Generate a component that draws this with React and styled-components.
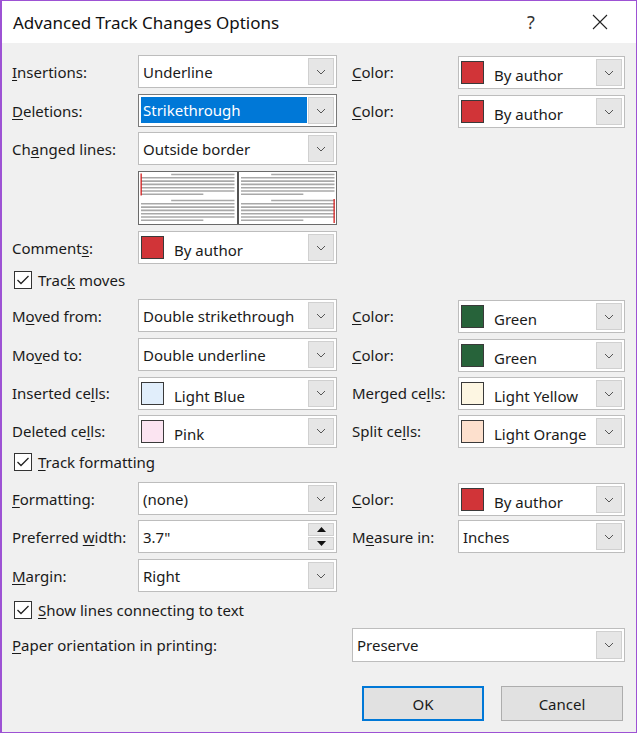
import React from "react";
import styled, { createGlobalStyle } from "styled-components";

const GlobalStyle = createGlobalStyle`
  html, body {
    margin: 0;
    padding: 0;
    background: #f0f0f0;
  }
  * {
    box-sizing: border-box;
  }
`;

const WindowUI = styled.div`
  width: 637px;
  height: 733px;
  border: 1px solid #9d52d4;
  border-left-width: 2px;
  background: #f0f0f0;
  font-family: "Noto Sans", "Open Sans", sans-serif;
  font-size: 15px;
  color: #1a1a1a;
  display: flex;
  flex-direction: column;
`;

const TitleBarUI = styled.div`
  height: 42px;
  background: #fff;
  display: flex;
  align-items: center;
  padding-left: 11px;
  flex-shrink: 0;
`;

const TitleUI = styled.div`
  flex: 1;
  font-size: 17px;
  color: #111;
`;

const HelpUI = styled.div`
  width: 20px;
  font-size: 18px;
  color: #333;
  margin-right: 30px;
`;

const CloseUI = styled.div`
  width: 46px;
  display: flex;
  justify-content: center;
  margin-right: 13px;
`;

const BodyUI = styled.div`
  padding: 0 11px 0 10px;
`;

const RowUI = styled.div`
  display: grid;
  grid-template-columns: 126px 199px 15px 106px 167px;
  align-items: center;
  height: ${(p) => p.$h || 33}px;
  margin-top: ${(p) => p.$mt || 6}px;
`;

const LabelUI = styled.div`
  white-space: nowrap;
  grid-column: ${(p) => p.$col || "auto"};
`;

const SelectUI = styled.div`
  grid-column: ${(p) => p.$col || "auto"};
  height: ${(p) => p.$tall || 33}px;
  margin-top: ${(p) => p.$shift || 0}px;
  display: flex;
  align-items: stretch;
  background: #fff;
  border: 1px solid ${(p) => (p.$focused ? "#7a7a7a" : "#bdbdbd")};
`;

const ValueUI = styled.div`
  flex: 1;
  display: flex;
  align-items: center;
  padding-left: 4px;
  white-space: nowrap;
  overflow: hidden;
`;

const HighlightUI = styled.div`
  flex: 1;
  margin: 2px 1px 3px 2px;
  display: flex;
  align-items: center;
  padding-left: 2px;
  background: #0078d7;
  color: #fff;
`;

const SwatchUI = styled.div`
  width: 23px;
  height: 23px;
  background: ${(p) => p.$color};
  border: 1px solid #3a3a3a;
  margin: 0 10px 0 -2px;
  flex-shrink: 0;
`;

const SwatchTextUI = styled.span`
  padding-top: 5px;
`;

const DropButtonUI = styled.div`
  width: 26px;
  margin: 2px 2px 2px 0;
  background: #e6e6e6;
  border: 1px solid #d0d0d0;
  display: flex;
  align-items: center;
  justify-content: center;
`;

const SpinUI = styled.div`
  width: 26px;
  margin: 2px 2px 2px 0;
  display: flex;
  flex-direction: column;
  gap: 1px;
`;

const SpinHalfUI = styled.div`
  flex: 1;
  background: #e6e6e6;
  border: 1px solid #d0d0d0;
  display: flex;
  align-items: center;
  justify-content: center;
`;

const PreviewUI = styled.div`
  grid-column: 2;
  height: 54px;
  border: 1px solid #6a6a6a;
  background: #fff;
  display: flex;
`;

const PreviewHalfUI = styled.div`
  flex: 1;
  display: flex;
  & + & {
    border-left: 2px solid #555;
  }
`;

const CheckRowUI = styled.div`
  display: flex;
  align-items: center;
  gap: 6px;
  height: 20px;
  margin-top: ${(p) => p.$mt || 6}px;
  padding-left: 2px;
`;

const CheckBoxUI = styled.div`
  width: 18px;
  height: 18px;
  border: 1px solid #333;
  background: #fff;
  display: flex;
  align-items: center;
  justify-content: center;
`;

const ButtonRowUI = styled.div`
  display: flex;
  justify-content: flex-end;
  gap: 17px;
  margin-top: 24px;
  padding-right: 2px;
`;

const ButtonUI = styled.div`
  width: 122px;
  height: 35px;
  background: #e1e1e1;
  border: ${(p) => (p.$primary ? "2px solid #0078d7" : "1px solid #adadad")};
  display: flex;
  align-items: center;
  justify-content: center;
`;

const Key = styled.span`
  text-decoration: underline;
  text-underline-offset: 2px;
`;

function Chevron() {
  return (
    <svg width="10" height="6" viewBox="0 0 10 6">
      <polyline points="1,1 5,5 9,1" fill="none" stroke="#555" strokeWidth="1" />
    </svg>
  );
}

function Select({ value, color, focused, col, shift, tall }) {
  return (
    <SelectUI $focused={focused} $col={col} $shift={shift} $tall={tall}>
      {focused ? (
        <HighlightUI>{value}</HighlightUI>
      ) : (
        <ValueUI>
          {color && <SwatchUI $color={color} />}
          {color ? <SwatchTextUI>{value}</SwatchTextUI> : value}
        </ValueUI>
      )}
      <DropButtonUI>
        <Chevron />
      </DropButtonUI>
    </SelectUI>
  );
}

function Label({ pre, k, post, col }) {
  return (
    <LabelUI $col={col}>
      {pre}
      <Key>{k}</Key>
      {post}
    </LabelUI>
  );
}

function CheckRow({ pre, k, post, mt }) {
  return (
    <CheckRowUI $mt={mt}>
      <CheckBoxUI>
        <svg width="14" height="12" viewBox="0 0 14 12">
          <polyline points="1.5,6 5,9.5 12.5,2" fill="none" stroke="#222" strokeWidth="1.3" />
        </svg>
      </CheckBoxUI>
      <span>
        {pre}
        <Key>{k}</Key>
        {post}
      </span>
    </CheckRowUI>
  );
}

// small page thumbnail: grey text lines with a red change bar
function PreviewPage({ barSide }) {
  const lines = [];
  const w = 97;
  [0, 26].forEach((top, p) => {
    for (let i = 0; i < 7; i++) {
      const y = top + 2.5 + i * 3.3;
      const x1 = i === 0 ? 32 : 2;
      const x2 = i === 6 ? 64 : w - 2;
      lines.push(<line key={p + "-" + i} x1={x1} x2={x2} y1={y} y2={y} stroke="#a8a8a8" strokeWidth="1.6" />);
    }
  });
  return (
    <svg width="100%" height="52" viewBox={`0 0 ${w} 52`} preserveAspectRatio="none">
      {lines}
      {barSide === "left" ? (
        <rect x="1.5" y="1.5" width="1.3" height="22" fill="#d32020" />
      ) : (
        <rect x={w - 3} y="27" width="1.3" height="24" fill="#d32020" />
      )}
    </svg>
  );
}

const RED = "#d13438";
const GREEN = "#27633a";

export default function App() {
  return (
    <>
      <GlobalStyle />
      <WindowUI>
        <TitleBarUI>
          <TitleUI>Advanced Track Changes Options</TitleUI>
          <HelpUI>?</HelpUI>
          <CloseUI>
            <svg width="16" height="16" viewBox="0 0 16 16">
              <path d="M1 1 L15 15 M15 1 L1 15" stroke="#222" strokeWidth="1.1" />
            </svg>
          </CloseUI>
        </TitleBarUI>

        <BodyUI>
          <RowUI $mt={11}>
            <Label k="I" post="nsertions:" />
            <Select value="Underline" />
            <Label col={4} k="C" post="olor:" />
            <Select value="By author" color={RED} shift={2} />
          </RowUI>
          <RowUI>
            <Label k="D" post="eletions:" />
            <Select value="Strikethrough" focused />
            <Label col={4} k="C" post="olor:" />
            <Select value="By author" color={RED} shift={2} />
          </RowUI>
          <RowUI>
            <Label pre="Ch" k="a" post="nged lines:" />
            <Select value="Outside border" />
          </RowUI>
          <RowUI $h={54}>
            <PreviewUI>
              <PreviewHalfUI>
                <PreviewPage barSide="left" />
              </PreviewHalfUI>
              <PreviewHalfUI>
                <PreviewPage barSide="right" />
              </PreviewHalfUI>
            </PreviewUI>
          </RowUI>
          <RowUI>
            <Label pre="Comment" k="s" post=":" />
            <Select value="By author" color={RED} />
          </RowUI>

          <CheckRow pre="Trac" k="k" post=" moves" />

          <RowUI $mt={8}>
            <Label pre="M" k="o" post="ved from:" />
            <Select value="Double strikethrough" />
            <Label col={4} k="C" post="olor:" />
            <Select value="Green" color={GREEN} shift={2} />
          </RowUI>
          <RowUI>
            <Label pre="Mo" k="v" post="ed to:" />
            <Select value="Double underline" />
            <Label col={4} k="C" post="olor:" />
            <Select value="Green" color={GREEN} shift={2} />
          </RowUI>
          <RowUI>
            <Label pre="Inserted ce" k="l" post="ls:" />
            <Select value="Light Blue" color="#e1eefb" />
            <Label col={4} pre="Merged ce" k="l" post="ls:" />
            <Select value="Light Yellow" color="#fdf6e2" shift={1} />
          </RowUI>
          <RowUI $mt={5}>
            <Label pre="Deleted ce" k="l" post="ls:" />
            <Select value="Pink" color="#fbe4f1" />
            <Label col={4} pre="Split ce" k="l" post="ls:" />
            <Select value="Light Orange" color="#fde0cd" shift={1} />
          </RowUI>

          <CheckRow k="T" post="rack formatting" mt={5} />

          <RowUI $mt={9}>
            <Label k="F" post="ormatting:" />
            <Select value="(none)" />
            <Label col={4} k="C" post="olor:" />
            <Select value="By author" color={RED} shift={2} />
          </RowUI>
          <RowUI>
            <Label pre="Preferred " k="w" post="idth:" />
            <SelectUI>
              <ValueUI>3.7"</ValueUI>
              <SpinUI>
                <SpinHalfUI>
                  <svg width="9" height="5" viewBox="0 0 9 5">
                    <polygon points="0,5 4.5,0 9,5" fill="#111" />
                  </svg>
                </SpinHalfUI>
                <SpinHalfUI>
                  <svg width="9" height="5" viewBox="0 0 9 5">
                    <polygon points="0,0 4.5,5 9,0" fill="#111" />
                  </svg>
                </SpinHalfUI>
              </SpinUI>
            </SelectUI>
            <Label col={4} pre="M" k="e" post="asure in:" />
            <Select value="Inches" />
          </RowUI>
          <RowUI>
            <Label k="M" post="argin:" />
            <Select value="Right" />
          </RowUI>

          <CheckRow k="S" post="how lines connecting to text" mt={8} />

          <RowUI $mt={8} $h={34}>
            <Label col="1 / 4" k="P" post="aper orientation in printing:" />
            <Select col="4 / 6" value="Preserve" tall={34} />
          </RowUI>

          <ButtonRowUI>
            <ButtonUI $primary>OK</ButtonUI>
            <ButtonUI>Cancel</ButtonUI>
          </ButtonRowUI>
        </BodyUI>
      </WindowUI>
    </>
  );
}
